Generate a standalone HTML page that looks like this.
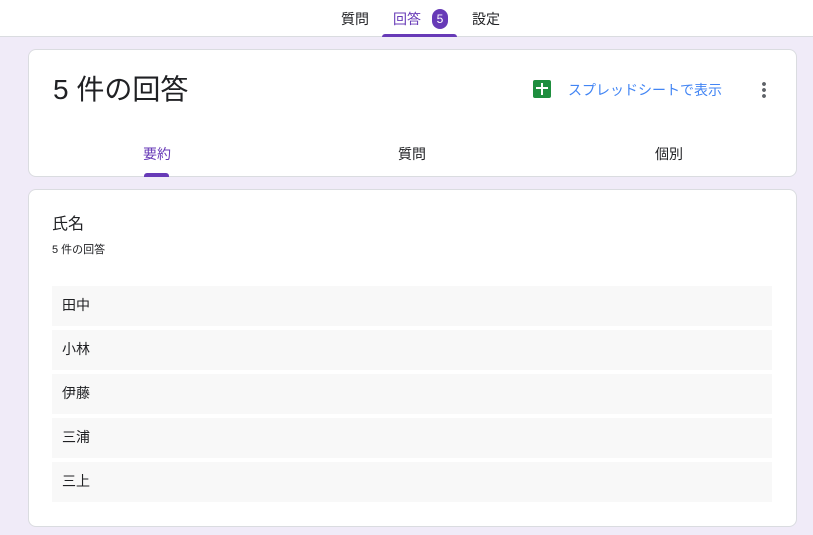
<!DOCTYPE html>
<html><head><meta charset="utf-8"><style>
*{margin:0;padding:0;box-sizing:border-box}
body{width:813px;height:535px;background:#f0ebf8;font-family:"Liberation Sans","Noto Sans CJK JP",sans-serif;color:#202124;position:relative;overflow:hidden}
.hdr{position:absolute;left:0;top:0;width:813px;height:37px;background:#fff;border-bottom:1px solid #dadce0}
.t{position:absolute;top:9px;font-size:14px}
.card{position:absolute;left:28px;width:769px;background:#fff;border:1px solid #dadce0;border-radius:8px}
.row{position:absolute;left:23px;width:720px;height:40px;background:#f8f8f8;font-size:14px;padding:10px 10px;line-height:18px}
</style></head><body>
<div class="hdr">
<div class="t" style="left:341px">質問</div>
<div class="t" style="left:393px;color:#673ab7">回答</div>
<div style="position:absolute;left:432px;top:9px;width:16px;height:20px;border-radius:9px;background:#673ab7;color:#fff;font-size:12px;display:flex;align-items:center;justify-content:center">5</div>
<div class="t" style="left:472px">設定</div>
<div style="position:absolute;left:382px;top:34px;width:75px;height:3px;background:#673ab7;border-radius:3px 3px 0 0"></div>
</div>
<div class="card" style="top:49px;height:128px">
<div style="position:absolute;left:24px;top:18px;font-size:28px">5 件の回答</div>
<div style="position:absolute;left:504px;top:30px;width:18px;height:18px;background:#1e8e3e;border-radius:2px"><div style="position:absolute;left:3px;top:7px;width:12px;height:2px;background:#fff"></div><div style="position:absolute;left:8px;top:3px;width:2px;height:12px;background:#fff"></div></div>
<div style="position:absolute;left:539px;top:30px;font-size:14px;color:#4285f4">スプレッドシートで表示</div>
<div style="position:absolute;left:733px;top:31px;width:4px;height:18px;background:radial-gradient(circle,#5f6368 1.8px,transparent 2px) 0 0/4px 6px"></div>
<div style="position:absolute;left:114px;top:94px;font-size:14px;color:#673ab7">要約</div>
<div style="position:absolute;left:115px;top:123px;width:25px;height:4px;background:#673ab7;border-radius:3px 3px 0 0"></div>
<div style="position:absolute;left:369px;top:94px;font-size:14px">質問</div>
<div style="position:absolute;left:626px;top:94px;font-size:14px">個別</div>
</div>
<div class="card" style="top:189px;height:338px">
<div style="position:absolute;left:23px;top:20px;font-size:16px">氏名</div>
<div style="position:absolute;left:23px;top:51px;font-size:11px">5 件の回答</div>
<div class="row" style="top:96px">田中</div>
<div class="row" style="top:140px">小林</div>
<div class="row" style="top:184px">伊藤</div>
<div class="row" style="top:228px">三浦</div>
<div class="row" style="top:272px">三上</div>
</div>
</body></html>
